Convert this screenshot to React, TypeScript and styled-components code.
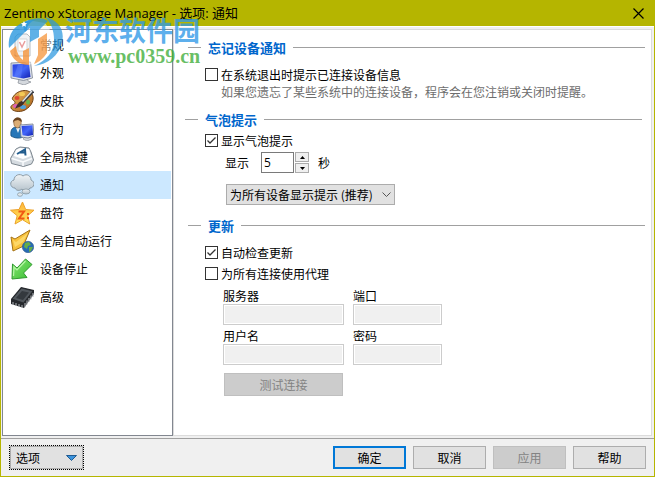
import React, { useState } from "react";
import styled, { createGlobalStyle, css } from "styled-components";

const GlobalStyle = createGlobalStyle`
  * { box-sizing: border-box; }
  body {
    margin: 0;
    font: 12px/17px "Noto Sans CJK SC", sans-serif;
    color: #000;
  }
  button, input, select { font: inherit; color: inherit; margin: 0; }
`;

const Window = styled.div`
  position: relative;
  display: flex;
  flex-direction: column;
  min-height: 100vh;
  background: #f0f0f0;
  border: 1px solid #b5b500;
  border-top: 0;
`;

const TitleBar = styled.header`
  display: flex;
  align-items: center;
  justify-content: space-between;
  height: 26px;
  padding: 0 8px 0 3px;
  background: #b5b500;
`;

const Title = styled.h1`
  margin: 0;
  font: 13px/18px "Open Sans", "Noto Sans CJK SC", sans-serif;
`;

const CloseButton = styled.button`
  display: grid;
  place-items: center;
  width: 16px;
  height: 16px;
  padding: 0;
  border: 0;
  background: none;
`;

const Main = styled.div`
  flex: 1;
  display: flex;
  padding: 2px 2px 2px 1px;
  border-top: 1px solid #fff;
  border-bottom: 1px solid #a0a0a0;
`;

const Sidebar = styled.nav`
  flex: none;
  width: 171px;
  padding: 1px;
  background: #fff;
  border: 1px solid #828790;
`;

const NavItem = styled.button<{ $active?: boolean }>`
  display: flex;
  align-items: center;
  gap: 6px;
  width: 100%;
  height: 28px;
  padding: 0 6px 1px;
  border: 0;
  text-align: left;
  background: ${(p) => (p.$active ? "#cce8ff" : "transparent")};
  svg { flex: none; }
`;

const Panel = styled.main`
  flex: 1;
  min-width: 0;
  padding: 8px 0;
  background: #fff;
  border: 1px solid #dcdcdc;
`;

const Heading = styled.h2<{ $outdent?: boolean }>`
  display: flex;
  align-items: center;
  gap: 7px;
  height: 19px;
  margin: 0;
  padding: ${(p) => (p.$outdent ? "0 9px 0 11px" : "0 6px 0 14px")};
  font-size: 13px;
  line-height: 19px;
  font-weight: 700;
  color: #0066cc;
  &::before, &::after {
    content: "";
    height: 1px;
    background: #a0a0a0;
  }
  &::before { width: 13px; }
  &::after { flex: 1; }
`;

const Section = styled.div<{ $top: number; $bottom: number }>`
  display: flex;
  flex-direction: column;
  align-items: flex-start;
  padding: ${(p) => p.$top}px 6px ${(p) => p.$bottom}px 31px;
`;

const CheckLabel = styled.label`
  display: flex;
  align-items: center;
  gap: 3px;
  height: 17px;
  & + & { margin-top: 4px; }
`;

const CheckSlot = styled.span`
  display: grid;
  width: 13px;
  height: 13px;
  > * { grid-area: 1 / 1; }
  svg { pointer-events: none; }
`;

const CheckInput = styled.input`
  appearance: none;
  width: 13px;
  height: 13px;
  border: 1px solid #333;
  background: #fff;
  &:not(:checked) + svg { visibility: hidden; }
`;

const Hint = styled.p`
  margin: 0 0 0 16px;
  color: #6d6d6d;
`;

const DelayRow = styled.div`
  display: flex;
  align-items: center;
  margin: 3px 0 11px 20px;
`;

const DelayInput = styled.input`
  width: 33px;
  height: 21px;
  margin-left: 12px;
  padding: 0 2px;
  border: 1px solid #7a7a7a;
  background: #fff;
  font-family: "Open Sans", sans-serif;
`;

const Spinner = styled.span`
  display: flex;
  flex-direction: column;
  gap: 1px;
  margin: 0 9px 0 1px;
`;

const SpinButton = styled.button`
  display: grid;
  place-items: center;
  width: 14px;
  height: 10px;
  padding: 0;
  border: 1px solid #acacac;
  background: #f0f0f0;
`;

const SelectSlot = styled.span`
  display: grid;
  align-items: center;
  margin-left: 21px;
  > * { grid-area: 1 / 1; }
  svg { justify-self: end; margin-right: 4px; pointer-events: none; }
`;

const Select = styled.select`
  appearance: none;
  width: 169px;
  height: 21px;
  padding: 0 20px 0 3px;
  border: 1px solid #acacac;
  border-radius: 0;
  background: #e1e1e1;
`;

const ProxyGrid = styled.div`
  display: grid;
  grid-template-columns: 121px 89px;
  gap: 2px 9px;
  margin: 5px 0 8px 18px;
`;

const Field = styled.label`
  display: flex;
  flex-direction: column;
`;

const FieldInput = styled.input`
  width: 100%;
  height: 21px;
  border: 1px solid #ccc;
  background: #f0f0f0;
  box-shadow: inset 0 0 0 1px #fff;
`;

const PushButton = styled.button<{ $primary?: boolean }>`
  width: 73px;
  height: 23px;
  padding: 0;
  border: 1px solid #adadad;
  background: #e1e1e1;
  ${(p) => p.$primary && css`border: 2px solid #0078d7;`}
  &:disabled {
    color: #838383;
    background: #ccc;
    border-color: #bfbfbf;
  }
`;

const TestButton = styled(PushButton)`
  width: 119px;
  margin-left: 19px;
`;

const Footer = styled.footer`
  display: flex;
  align-items: center;
  gap: 7px;
  height: 37px;
  padding: 0 8px;
`;

const OptionsButton = styled.button`
  display: flex;
  align-items: center;
  justify-content: space-between;
  width: 75px;
  height: 25px;
  margin-right: auto;
  padding: 0 6px;
  border: 1px dotted #000;
  background: #e1e1e1;
  box-shadow: inset 0 0 0 1px #adadad;
`;

const Watermark = styled.div`
  position: absolute;
  left: 6px;
  top: 14px;
  display: flex;
  gap: 1px;
  pointer-events: none;
`;

const WatermarkText = styled.div`
  padding-top: 2px;
  font: 700 27px/27px "Noto Sans CJK SC", sans-serif;
  color: rgba(48, 153, 231, 0.78);
`;

const WatermarkUrl = styled.div`
  padding-left: 3px;
  font: 700 20px/26px "Liberation Serif", serif;
  color: rgba(63, 174, 59, 0.8);
`;

const icons: Record<string, React.ReactNode> = {
  general: (
    <>
      <path d="M5 4l3-3h9l3 3v19H5z" fill="#dfe5ea" stroke="#6c7780" />
      <path d="M8 6h9v12H8z" fill="#fff" stroke="#a4adb5" />
      <path d="M9.500 9l2.500 5 3-6" fill="none" stroke="#d43d3d" strokeWidth="1.500" />
    </>
  ),
  display: (
    <>
      <path d="M9 18l8-1 1 3 3 1-7 3-6-2z" fill="#d4d8dd" stroke="#858b93" strokeWidth=".7" />
      <path d="M1 2l19.500-1 2 16-9 2.500L1 17z" fill="#dde2ea" stroke="#798291" strokeWidth=".8" />
      <path d="M2.500 3.500L19 2.500l1.500 13.500-7 1.500-11-2z" fill="url(#screen)" />
      <path d="M8 3.200l5-.3-2 13.800-7-1z" fill="#718fff" opacity=".35" />
    </>
  ),
  skin: (
    <>
      <path d="M3 8C7 1 18-1 22 5c3 5 0 12-7 16-6 3-13 1-14-2-1-4 5-3 4-6-1-2-4-2-2-5z" fill="url(#wood)" stroke="#704317" />
      <ellipse cx="12" cy="5" rx="3" ry="2" fill="#f4ca55" />
      <ellipse cx="7" cy="9" rx="2.500" ry="2" fill="#dc4931" />
      <ellipse cx="6" cy="17" rx="3" ry="2" fill="#df5fb2" />
      <ellipse cx="13" cy="18" rx="3" ry="2" fill="#4fa1db" />
      <ellipse cx="18" cy="13" rx="2" ry="2.500" fill="#65b94b" />
      <path d="M23 2L11 15" stroke="#393b42" strokeWidth="3" />
      <path d="M22 2L12 13" stroke="#e3e7ea" strokeWidth="1.400" />
      <path d="M12 12l2 2c-2 4-6 4-9 6 2-4 3-7 7-8z" fill="#403026" />
    </>
  ),
  behavior: (
    <>
      <path d="M1 19c-1-7 2-9 6-9s7 3 6 10c-4 2-9 1-12-1z" fill="#2777b8" stroke="#124b78" strokeWidth=".8" />
      <path d="M6 11l2 5 2-5z" fill="#e9f1f5" />
      <ellipse cx="7.500" cy="6" rx="3.700" ry="5" fill="#dcae75" stroke="#7c5128" strokeWidth=".6" />
      <path d="M3 6C2 0 12-2 12 5L8 3 4 4z" fill="#69431f" />
      <path d="M15 20h5l2 2-5 2-4-2z" fill="#d3d7dc" stroke="#858b93" strokeWidth=".6" />
      <path d="M10 8l13-1 1 12-6 2-7-1z" fill="#dce2ec" stroke="#70798a" strokeWidth=".8" />
      <path d="M11.500 9l11-.7.5 9.700-5 1-5.500-.7z" fill="url(#screen)" />
    </>
  ),
  hotkey: (
    <>
      <path d="M6 4l4-2 9 1 2 4 2.500 8-2 4-8 2.500-12-3-1-5z" fill="#d5dbe0" stroke="#7c868f" />
      <path d="M6 5l4-2 9 1 2 7-8 3-9-3z" fill="#fff" />
      <path d="M2 13.500l11 3.500 9-3.500M13 17v4" fill="none" stroke="#fafcfd" strokeWidth="1.500" />
      <path d="M7 9l8-4.500.5 6M10 7.500h5" fill="none" stroke="#225d8e" strokeWidth="2" />
    </>
  ),
  cloud: (
    <>
      <path d="M5 15c-5 0-6-7-1-8 0-5 6-7 9-4 4-3 8 0 8 4 5 2 3 8-1 8-2 4-6 4-8 1-2 2-6 2-7-1z" fill="url(#mist)" stroke="#8b9aa5" />
      <ellipse cx="16" cy="18.500" rx="4" ry="2.500" fill="url(#mist)" stroke="#899aa5" strokeWidth=".8" />
      <ellipse cx="10" cy="21.500" rx="2.500" ry="1.800" fill="#dfe7ec" stroke="#899aa5" strokeWidth=".8" />
    </>
  ),
  star: (
    <>
      <path d="M12.500 1l3.200 7.500 8.300.7-6.300 5.500 2 8.300-7.200-4.300L5 23l2.200-8.300L.5 9.200l8.500-.7z" fill="url(#gold)" stroke="#eca12a" />
      <path d="M8.500 10.500H14L9 17.500h5.500M18 12v2M18 16v2" fill="none" stroke="#f05a13" strokeWidth="2" />
    </>
  ),
  autorun: (
    <>
      <path d="M20 1l-5 12 3 2-15 7-2-14 4 2z" fill="#f8c13c" stroke="#a67316" />
      <path d="M18 4l-5 9-8 5-2-7 3 2z" fill="#ffe17a" opacity=".7" />
      <circle cx="18" cy="18" r="5.700" fill="#276bb4" stroke="#2d5789" strokeWidth=".6" />
      <path d="M15 14l4-1 2 3-3 1-1 3-3-2zM19 18l4 0-2 4-2 1z" fill="#67ae48" />
    </>
  ),
  stop: (
    <>
      <path d="M15.500 2L22 7.500 13.500 16l3.500 4.500-15 1.500L2.500 7 7 11z" fill="url(#green)" stroke="#2f992f" />
      <path d="M15.500 4L7 13 4 10l-.5 9" fill="none" stroke="#b6f6a5" strokeWidth="1.200" />
    </>
  ),
  advanced: (
    <>
      <path d="M1 14L11 2l13 3v4L14 23 1 19z" fill="#26292d" />
      <path d="M2 14L11.500 3 23 6l-9.500 12z" fill="#51575d" stroke="#202225" strokeWidth=".7" />
      <path d="M6 13l6-7 7 1.500-6 7.500z" fill="#34393e" />
      <path d="M15 18v4M17 15.500v4M19 13v4M21 10.500v4M23 8v4M3 17v3M6 18v3M9 19v3M12 20v3" stroke="#b4b9be" strokeWidth="1" />
    </>
  ),
};

const navItems = [
  ["general", "常规"],
  ["display", "外观"],
  ["skin", "皮肤"],
  ["behavior", "行为"],
  ["hotkey", "全局热键"],
  ["cloud", "通知"],
  ["star", "盘符"],
  ["autorun", "全局自动运行"],
  ["stop", "设备停止"],
  ["advanced", "高级"],
];

function Gradients() {
  return (
    <defs>
      <linearGradient id="screen" x2="1" y2="1"><stop stopColor="#263fdc" /><stop offset=".5" stopColor="#4266fa" /><stop offset="1" stopColor="#101ead" /></linearGradient>
      <linearGradient id="wood" x2="1" y2="1"><stop stopColor="#efbd62" /><stop offset="1" stopColor="#a65c17" /></linearGradient>
      <linearGradient id="mist" x2="0" y2="1"><stop stopColor="#f0f4f6" /><stop offset="1" stopColor="#b5c2cb" /></linearGradient>
      <linearGradient id="gold" x2="0" y2="1"><stop stopColor="#ffb53a" /><stop offset="1" stopColor="#ffe45c" /></linearGradient>
      <linearGradient id="green" x2="1" y2="1"><stop stopColor="#8be878" /><stop offset="1" stopColor="#38bc30" /></linearGradient>
    </defs>
  );
}

function Check({ label, checked }: { label: string; checked?: boolean }) {
  return (
    <CheckLabel>
      <CheckSlot>
        <CheckInput type="checkbox" defaultChecked={checked} />
        <svg width="13" height="13" viewBox="0 0 13 13" aria-hidden="true">
          <path d="M2.500 6.500l2.500 2.500 5.500-5.500" fill="none" stroke="#333" strokeWidth="1.300" />
        </svg>
      </CheckSlot>
      {label}
    </CheckLabel>
  );
}

function ProxyField({ label, type = "text" }: { label: string; type?: string }) {
  return (
    <Field>
      {label}
      <FieldInput type={type} disabled />
    </Field>
  );
}

export default function App() {
  const [active, setActive] = useState("cloud");
  const [delay, setDelay] = useState(5);
  return (
    <>
      <GlobalStyle />
      <Window>
        <TitleBar>
          <Title>Zentimo xStorage Manager - 选项: 通知</Title>
          <CloseButton aria-label="关闭">
            <svg width="11" height="11" viewBox="0 0 11 11"><path d="M.5.5l10 10M10.500.5l-10 10" stroke="#000" strokeWidth="1.200" /></svg>
          </CloseButton>
        </TitleBar>
        <Main>
          <Sidebar>
            {navItems.map(([id, label]) => (
              <NavItem key={id} $active={id === active} onClick={() => setActive(id)}>
                <svg width="24" height="24" viewBox="0 0 24 24" aria-hidden="true">
                  {id === "general" && <Gradients />}
                  {icons[id]}
                </svg>
                {label}
              </NavItem>
            ))}
          </Sidebar>
          <Panel>
            <Heading>忘记设备通知</Heading>
            <Section $top={9} $bottom={10}>
              <Check label="在系统退出时提示已连接设备信息" />
              <Hint>如果您遗忘了某些系统中的连接设备，程序会在您注销或关闭时提醒。</Hint>
            </Section>
            <Heading $outdent>气泡提示</Heading>
            <Section $top={3} $bottom={11}>
              <Check label="显示气泡提示" checked />
              <DelayRow>
                <label htmlFor="delay">显示</label>
                <DelayInput id="delay" inputMode="numeric" value={delay} onChange={(e) => setDelay(Number(e.target.value) || 0)} />
                <Spinner>
                  <SpinButton aria-label="增加" onClick={() => setDelay(delay + 1)}>
                    <svg width="5" height="3" viewBox="0 0 5 3"><path d="M0 3L2.500 0 5 3z" /></svg>
                  </SpinButton>
                  <SpinButton aria-label="减少" onClick={() => setDelay(Math.max(0, delay - 1))}>
                    <svg width="5" height="3" viewBox="0 0 5 3"><path d="M0 0l2.500 3L5 0z" /></svg>
                  </SpinButton>
                </Spinner>
                秒
              </DelayRow>
              <SelectSlot>
                <Select aria-label="气泡提示范围">
                  <option>为所有设备显示提示 (推荐)</option>
                </Select>
                <svg width="9" height="6" viewBox="0 0 9 6"><path d="M.5.5l4 4 4-4" fill="none" stroke="#555" /></svg>
              </SelectSlot>
            </Section>
            <Heading>更新</Heading>
            <Section $top={9} $bottom={0}>
              <Check label="自动检查更新" checked />
              <Check label="为所有连接使用代理" />
              <ProxyGrid>
                <ProxyField label="服务器" />
                <ProxyField label="端口" />
                <ProxyField label="用户名" />
                <ProxyField label="密码" type="password" />
              </ProxyGrid>
              <TestButton disabled>测试连接</TestButton>
            </Section>
          </Panel>
        </Main>
        <Footer>
          <OptionsButton>
            选项
            <svg width="11" height="6" viewBox="0 0 11 6"><path d="M.5.5h10l-5 5z" fill="#3b93dc" stroke="#205b91" /></svg>
          </OptionsButton>
          <PushButton $primary>确定</PushButton>
          <PushButton>取消</PushButton>
          <PushButton disabled>应用</PushButton>
          <PushButton>帮助</PushButton>
        </Footer>
        <Watermark>
          <svg width="57" height="54" viewBox="0 0 57 54" aria-hidden="true">
            <path d="M3 28L20 6l18 3 10 14-4 20-22 8L6 39z" fill="#fff" opacity=".5" />
            <path d="M2 34C0 17 12 6 28 6c-5 2-8 6-8 10L2 34z" fill="#2997df" opacity=".8" />
            <path d="M19 7c8-3 16-4 22 0l-9 9v7l-9 5V14l-5 4c-2-4-2-8 1-11z" fill="#2997df" opacity=".75" />
            <path d="M38 3c14 3 20 14 17 25-3 14-14 22-28 24 13-6 20-14 20-26 0-10-3-17-9-23z" fill="#2997df" opacity=".72" />
            <path d="M17 7l1 2 2 .3-1.500 1.500.4 2-1.900-1-1.900 1 .4-2L14 9.300l2-.3z" fill="#fff" />
            <path d="M3 37l6-5c1 7 3 11 7 14v-9l6-3v17C12 51 5 45 3 37z" fill="#f5943a" opacity=".8" />
            <path d="M31 25l9-6v20c-4 6-8 9-13 11l4-9z" fill="#f5943a" opacity=".75" />
          </svg>
          <div>
            <WatermarkText>河东软件园</WatermarkText>
            <WatermarkUrl>www.pc0359.cn</WatermarkUrl>
          </div>
        </Watermark>
      </Window>
    </>
  );
}
